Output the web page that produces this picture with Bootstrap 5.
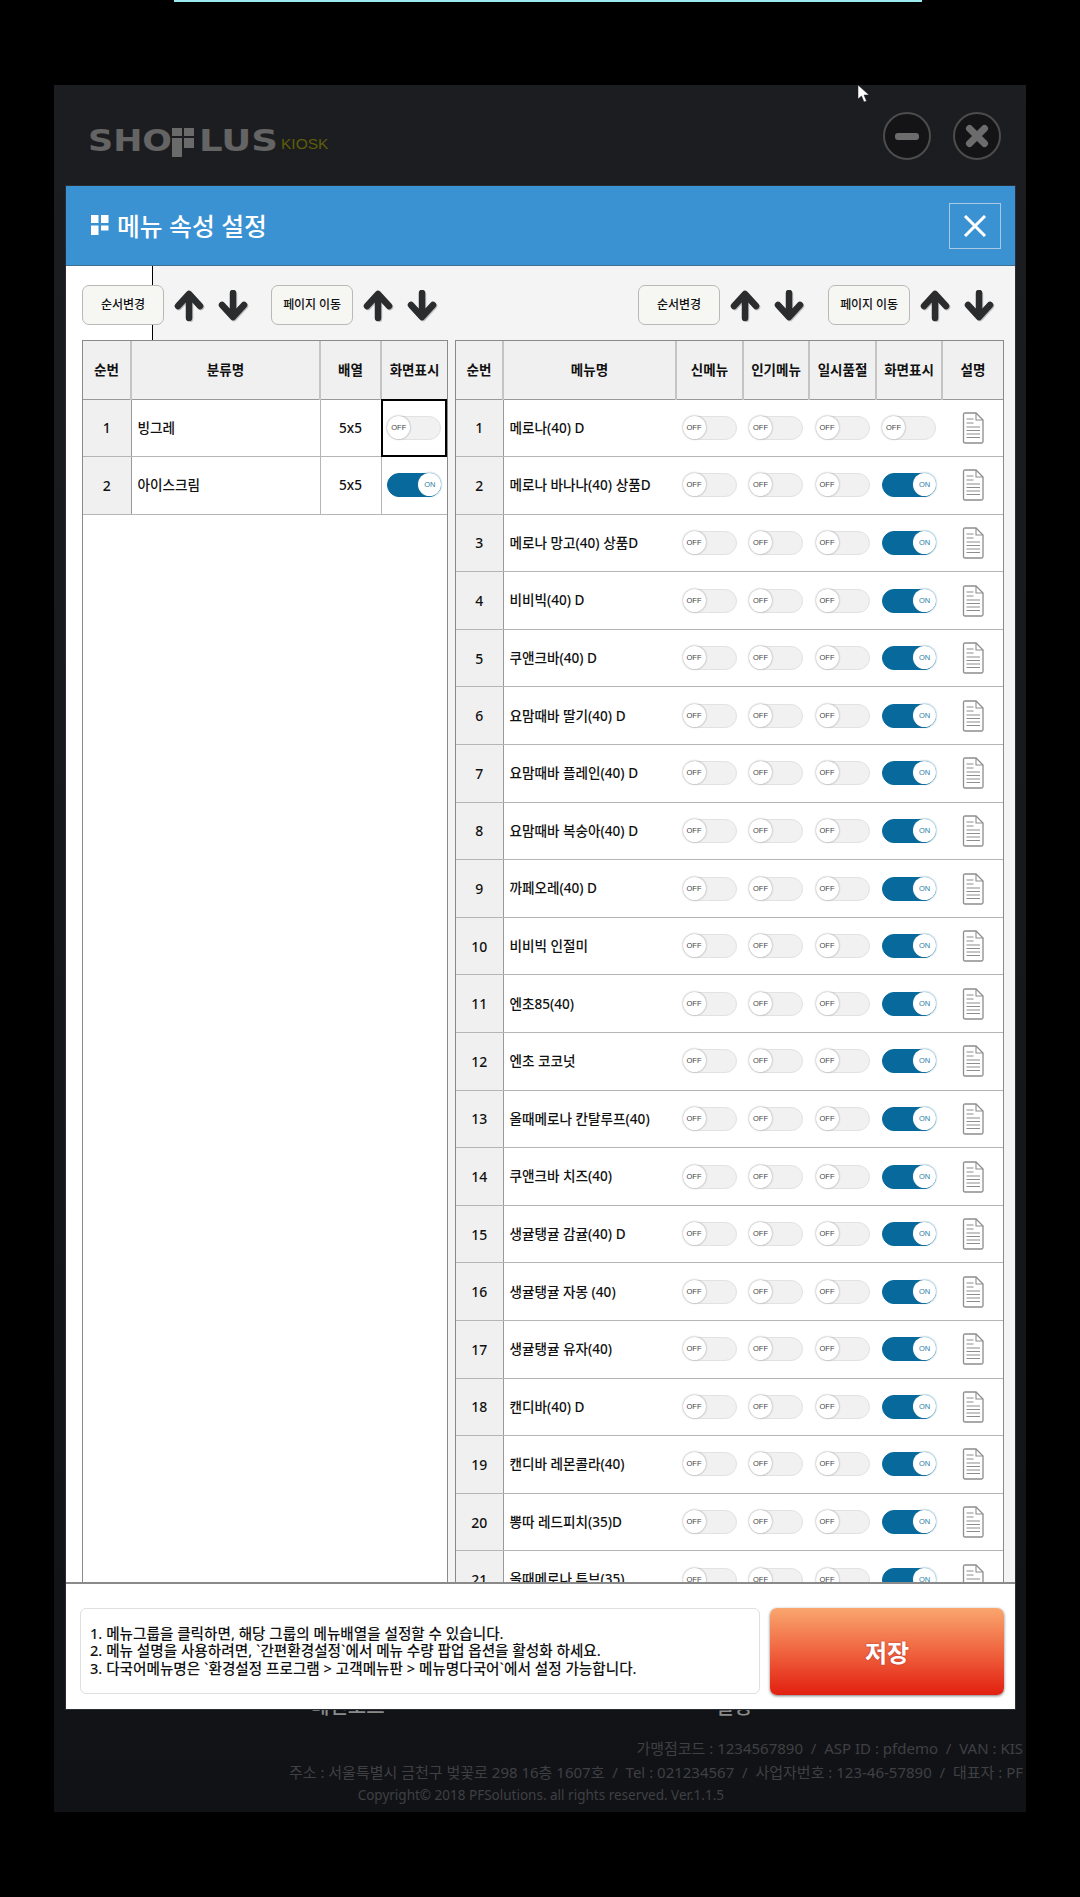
<!DOCTYPE html>
<html lang="ko"><head><meta charset="utf-8"><title>메뉴 속성 설정</title>
<link href="https://cdn.jsdelivr.net/npm/bootstrap@5.3.0/dist/css/bootstrap.min.css" rel="stylesheet">
<style>
html,body{background:#000;margin:0;height:1897px;overflow:hidden}
body{font-family:"Noto Sans","Noto Sans CJK KR",sans-serif;color:#111}
.topbar{height:2px;width:748px;margin-left:174px;margin-bottom:83px;background:#9aeaf0}
.kiosk-panel{width:972px;height:1727px;margin-left:54px;background:linear-gradient(#1c1d21,#111216);position:relative;overflow:hidden}
.panel-head{padding:27px 25px 0 35px;height:74px}
.round-ctl{width:48px;height:48px}
.round-gap{gap:22px}
.cursor-mark{position:absolute;left:804px;top:0;width:12px;height:17px}
.back-row{font-size:20px;line-height:26px;color:#8a8a8a;font-weight:500;height:26px}
.back-row span:first-child{margin-left:257px}
.back-row span:last-child{margin-right:274px}
.foot-lines{font-size:15px;line-height:23.700px;color:#3f4044;padding:17px 3px 4px 0;white-space:nowrap}
.foot-copy{padding-right:299px;font-size:13.500px}
.menu-modal{position:absolute;left:12px;top:101px;width:949px;height:1523px;background:#fff;box-shadow:0 0 0 1px #2a2d33}
.modal-top{height:80px;background:#3b92d2;border-bottom:1px solid #3f6f92;padding:0 14px 0 25px;color:#fff}
.modal-title{font-size:24.800px;font-weight:500;line-height:1;gap:8px}
.modal-title span{padding-top:2px}
.close-x{width:52px;height:46px;border:1px solid #a9c8e3;border-radius:0;padding:0;margin-top:0}
.tool-row{height:74px;padding:4px 21px 0 16px;background:linear-gradient(90deg,#fff 86px,#000 86px,#000 87px,#f4f4f4 87px)}
.tool-btn{width:82px;height:40px;padding:0;font-size:12px;font-weight:500;background:#f6f6f3;border:1px solid #b9b9b9;border-radius:7px;color:#111;letter-spacing:-.1px}
.arr{width:30px;height:31px;filter:drop-shadow(1px 1px 0 #bdbdbd)}
.arr-gap{gap:14px}.grp-gap{gap:10px}.set-gap{gap:24px}.set-gap-l{gap:23px}
.table-zone{height:1244px;padding-left:16px;background:linear-gradient(90deg,#fff 16px,#f4f4f4 16px);border-bottom:2px solid #8a8a8a;overflow:hidden;gap:7px}
.tbl-left{width:366px}.tbl-right{width:549px}
.tbl-wrap{background:#fff;border:1px solid #8a8a8a;border-bottom:0;height:1244px;overflow:hidden}
.grid-t{table-layout:fixed;width:100%;margin:0;border-collapse:collapse;font-size:13.600px;font-weight:500}
.grid-t>:not(caption)>*>*{padding:0;vertical-align:middle;border:1px solid #b5b5b5;background:transparent;color:#111;box-shadow:none}
.grid-t tr>*:first-child{border-left:0}.grid-t tr>*:last-child{border-right:0}
.grid-t thead tr>*{height:58px;background:#f0f0f0;font-size:13.500px;font-weight:700;text-align:center;border-top:0;border-bottom-color:#999;border-left-width:2px;border-left-color:#c4c4c4}
.grid-t thead tr>*:first-child{border-left:0}
.grid-t tbody td{height:57.600px;text-align:center}
.grid-t tbody td.num-c{background:#f0f0f0;font-size:14px;border-right-color:#999}
.grid-t tbody td.name-c{text-align:left;padding-left:6px;white-space:nowrap;border-right:0}
.grid-t tbody td.tog-c{border-left:0;border-right:0}
.grid-t tbody td.sel-c{outline:2px solid #000;outline-offset:-2px}
.sw{width:54px;height:24px;border-radius:12px;background:#f1f1f1;border:1px solid #e2e2e2;vertical-align:middle}
.sw i{width:23px;height:23px;margin:-1px 0 -1px -1px;border-radius:50%;background:#fff;box-shadow:0 0 2px #888;font:500 7.500px/23px "Liberation Sans",sans-serif;color:#444;text-align:center}
.sw.on{background:#07699c;border-color:#07699c;justify-content:flex-end}
.sw.on i{margin:-1px -1px -1px 0;color:#2c7ea6;box-shadow:0 0 2px #2a7ea5}
.doc-i{width:22px;height:32px;vertical-align:middle}
.modal-bottom{padding:24px 11px 0 14px;gap:10px}
.note-box{width:680px;height:86px;border:1px solid #dfdfdf;border-radius:6px;padding-left:9px;font-size:14.620px;line-height:17.300px;font-weight:500;white-space:nowrap}
.save-btn{width:234px;height:87px;border:0;border-radius:7px;background:linear-gradient(#f9a66f,#f0643f 50%,#e21f10);color:#fff;font-size:24px;font-weight:700;box-shadow:0 1px 3px #777;padding:3px 0 0;text-shadow:0 0 2px #a33}
.save-btn:hover{background:linear-gradient(#f9a66f,#f0643f 50%,#e21f10);color:#fff}
.logo-svg{width:260px;height:44px;margin-top:11px}
</style></head><body>
<svg width="0" height="0" class="d-block" aria-hidden="true"><defs>
<symbol id="up" viewBox="0 0 30 31"><path d="M15 28V5M4 16 15 4l11 12" fill="none" stroke="#2b2c2e" stroke-width="6.5" stroke-linecap="round" stroke-linejoin="round"/></symbol>
<symbol id="dn" viewBox="0 0 30 31"><path d="M15 3v23M4 15l11 12 11-12" fill="none" stroke="#2b2c2e" stroke-width="6.5" stroke-linecap="round" stroke-linejoin="round"/></symbol>
<symbol id="doc" viewBox="0 0 22 32"><path d="M1.500 2.500q0-1.500 1.500-1.500H14l7 7v21.500q0 1.500-1.500 1.500H3q-1.500 0-1.500-1.500z" fill="#fff" stroke="#8d8d8d" stroke-width="1.300"/><path d="M14 1v7h7" fill="none" stroke="#8d8d8d" stroke-width="1.100"/><path d="M4.500 7h7M4.500 11h7M4.500 15h13.500M4.500 18.500h13.500M4.500 22h13.500M4.500 25.500h13.500" stroke="#8d8d8d" stroke-width="1.100"/></symbol>
</defs></svg>
<div class="topbar"></div>
<div class="kiosk-panel d-flex flex-column">
<svg class="cursor-mark" viewBox="0 0 12 17"><path d="M0 0v14l3.500-3 2.500 6 2.500-1-2.500-6H11z" fill="#fff" stroke="#222" stroke-width=".5"/></svg>
<div class="panel-head d-flex justify-content-between align-items-start">
<svg class="logo-svg" viewBox="0 0 260 44"><g font-family="DejaVu Sans" font-weight="700" font-size="31" fill="#646464"><text x="-1" y="28" textLength="84" lengthAdjust="spacingAndGlyphs">SHO</text><text x="110" y="28" textLength="79" lengthAdjust="spacingAndGlyphs">LUS</text></g><g fill="#6a6a6a"><rect x="83" y="5" width="10" height="8"/><rect x="95" y="5" width="10" height="8"/><rect x="83" y="15" width="10" height="19"/><rect x="95" y="15" width="10" height="10"/></g><text x="192" y="26" font-family="Liberation Sans" font-size="15.500" fill="#5e5e08">KIOSK</text></svg>
<div class="d-flex round-gap">
<svg class="round-ctl" viewBox="0 0 48 48"><circle cx="24" cy="24" r="23" fill="#141416" stroke="#4c4c4c" stroke-width="2"/><rect x="12" y="21" width="24" height="7" rx="3" fill="#6c6c6c"/></svg>
<svg class="round-ctl" viewBox="0 0 48 48"><circle cx="24" cy="24" r="23" fill="#141416" stroke="#4c4c4c" stroke-width="2"/><path d="M16.500 16.500l15 15M31.500 16.500l-15 15" stroke="#6c6c6c" stroke-width="7" stroke-linecap="round"/></svg>
</div></div>
<div class="mt-auto back-row d-flex justify-content-between"><span>메인모드</span><span>설정</span></div>
<div class="foot-lines text-end">
<div>가맹점코드 : 1234567890 &nbsp;/&nbsp; ASP ID : pfdemo &nbsp;/&nbsp; VAN : KIS</div>
<div>주소 : 서울특별시 금천구 벚꽃로 298 16층 1607호 &nbsp;/&nbsp; Tel : 021234567 &nbsp;/&nbsp; 사업자번호 : 123-46-57890 &nbsp;/&nbsp; 대표자 : PF</div>
<div class="foot-copy">Copyright© 2018 PFSolutions. all rights reserved. Ver.1.1.5</div>
</div>
<div class="menu-modal">
<div class="modal-top d-flex justify-content-between align-items-center">
<div class="modal-title d-flex align-items-center"><svg width="18" height="20" viewBox="0 0 18 20" fill="#fff"><rect width="7.500" height="8"/><rect x="10" width="7.500" height="8"/><rect y="10.500" width="7.500" height="9.500"/><rect x="10" y="10.500" width="7.500" height="5"/></svg><span>메뉴 속성 설정</span></div>
<button class="btn close-x d-flex align-items-center justify-content-center" type="button" aria-label="닫기"><svg width="24" height="22" viewBox="0 0 24 22"><path d="M2 1l20 20M22 1 2 21" stroke="#fff" stroke-width="3"/></svg></button>
</div>
<div class="tool-row d-flex justify-content-between align-items-center">
<div class="d-flex set-gap-l align-items-center">
<div class="d-flex grp-gap align-items-center"><button class="btn tool-btn" type="button">순서변경</button><div class="d-flex arr-gap"><svg class="arr"><use href="#up"/></svg><svg class="arr"><use href="#dn"/></svg></div></div>
<div class="d-flex grp-gap align-items-center"><button class="btn tool-btn" type="button">페이지 이동</button><div class="d-flex arr-gap"><svg class="arr"><use href="#up"/></svg><svg class="arr"><use href="#dn"/></svg></div></div>
</div>
<div class="d-flex set-gap align-items-center">
<div class="d-flex grp-gap align-items-center"><button class="btn tool-btn" type="button">순서변경</button><div class="d-flex arr-gap"><svg class="arr"><use href="#up"/></svg><svg class="arr"><use href="#dn"/></svg></div></div>
<div class="d-flex grp-gap align-items-center"><button class="btn tool-btn" type="button">페이지 이동</button><div class="d-flex arr-gap"><svg class="arr"><use href="#up"/></svg><svg class="arr"><use href="#dn"/></svg></div></div>
</div></div>
<div class="table-zone d-flex">
<div class="tbl-wrap tbl-left"><table class="table grid-t"><colgroup><col style="width:48px"><col style="width:189px"><col style="width:61px"><col></colgroup>
<thead><tr><th>순번</th><th>분류명</th><th>배열</th><th>화면표시</th></tr></thead><tbody>
<tr><td class="num-c">1</td><td class="name-c">빙그레</td><td>5x5</td><td class="sel-c"><span class="sw d-inline-flex"><i>OFF</i></span></td></tr>
<tr><td class="num-c">2</td><td class="name-c">아이스크림</td><td>5x5</td><td><span class="sw on d-inline-flex"><i>ON</i></span></td></tr>
</tbody></table></div>
<div class="tbl-wrap tbl-right"><table class="table grid-t"><colgroup><col style="width:47px"><col style="width:173px"><col style="width:67px"><col style="width:66px"><col style="width:67px"><col style="width:66px"><col></colgroup>
<thead><tr><th>순번</th><th>메뉴명</th><th>신메뉴</th><th>인기메뉴</th><th>일시품절</th><th>화면표시</th><th>설명</th></tr></thead><tbody>
<tr><td class="num-c">1</td><td class="name-c">메로나(40) D</td><td class="tog-c"><span class="sw d-inline-flex"><i>OFF</i></span></td><td class="tog-c"><span class="sw d-inline-flex"><i>OFF</i></span></td><td class="tog-c"><span class="sw d-inline-flex"><i>OFF</i></span></td><td class="tog-c"><span class="sw d-inline-flex"><i>OFF</i></span></td><td class="tog-c"><svg class="doc-i"><use href="#doc"/></svg></td></tr>
<tr><td class="num-c">2</td><td class="name-c">메로나 바나나(40) 상품D</td><td class="tog-c"><span class="sw d-inline-flex"><i>OFF</i></span></td><td class="tog-c"><span class="sw d-inline-flex"><i>OFF</i></span></td><td class="tog-c"><span class="sw d-inline-flex"><i>OFF</i></span></td><td class="tog-c"><span class="sw on d-inline-flex"><i>ON</i></span></td><td class="tog-c"><svg class="doc-i"><use href="#doc"/></svg></td></tr>
<tr><td class="num-c">3</td><td class="name-c">메로나 망고(40) 상품D</td><td class="tog-c"><span class="sw d-inline-flex"><i>OFF</i></span></td><td class="tog-c"><span class="sw d-inline-flex"><i>OFF</i></span></td><td class="tog-c"><span class="sw d-inline-flex"><i>OFF</i></span></td><td class="tog-c"><span class="sw on d-inline-flex"><i>ON</i></span></td><td class="tog-c"><svg class="doc-i"><use href="#doc"/></svg></td></tr>
<tr><td class="num-c">4</td><td class="name-c">비비빅(40) D</td><td class="tog-c"><span class="sw d-inline-flex"><i>OFF</i></span></td><td class="tog-c"><span class="sw d-inline-flex"><i>OFF</i></span></td><td class="tog-c"><span class="sw d-inline-flex"><i>OFF</i></span></td><td class="tog-c"><span class="sw on d-inline-flex"><i>ON</i></span></td><td class="tog-c"><svg class="doc-i"><use href="#doc"/></svg></td></tr>
<tr><td class="num-c">5</td><td class="name-c">쿠앤크바(40) D</td><td class="tog-c"><span class="sw d-inline-flex"><i>OFF</i></span></td><td class="tog-c"><span class="sw d-inline-flex"><i>OFF</i></span></td><td class="tog-c"><span class="sw d-inline-flex"><i>OFF</i></span></td><td class="tog-c"><span class="sw on d-inline-flex"><i>ON</i></span></td><td class="tog-c"><svg class="doc-i"><use href="#doc"/></svg></td></tr>
<tr><td class="num-c">6</td><td class="name-c">요맘때바 딸기(40) D</td><td class="tog-c"><span class="sw d-inline-flex"><i>OFF</i></span></td><td class="tog-c"><span class="sw d-inline-flex"><i>OFF</i></span></td><td class="tog-c"><span class="sw d-inline-flex"><i>OFF</i></span></td><td class="tog-c"><span class="sw on d-inline-flex"><i>ON</i></span></td><td class="tog-c"><svg class="doc-i"><use href="#doc"/></svg></td></tr>
<tr><td class="num-c">7</td><td class="name-c">요맘때바 플레인(40) D</td><td class="tog-c"><span class="sw d-inline-flex"><i>OFF</i></span></td><td class="tog-c"><span class="sw d-inline-flex"><i>OFF</i></span></td><td class="tog-c"><span class="sw d-inline-flex"><i>OFF</i></span></td><td class="tog-c"><span class="sw on d-inline-flex"><i>ON</i></span></td><td class="tog-c"><svg class="doc-i"><use href="#doc"/></svg></td></tr>
<tr><td class="num-c">8</td><td class="name-c">요맘때바 복숭아(40) D</td><td class="tog-c"><span class="sw d-inline-flex"><i>OFF</i></span></td><td class="tog-c"><span class="sw d-inline-flex"><i>OFF</i></span></td><td class="tog-c"><span class="sw d-inline-flex"><i>OFF</i></span></td><td class="tog-c"><span class="sw on d-inline-flex"><i>ON</i></span></td><td class="tog-c"><svg class="doc-i"><use href="#doc"/></svg></td></tr>
<tr><td class="num-c">9</td><td class="name-c">까페오레(40) D</td><td class="tog-c"><span class="sw d-inline-flex"><i>OFF</i></span></td><td class="tog-c"><span class="sw d-inline-flex"><i>OFF</i></span></td><td class="tog-c"><span class="sw d-inline-flex"><i>OFF</i></span></td><td class="tog-c"><span class="sw on d-inline-flex"><i>ON</i></span></td><td class="tog-c"><svg class="doc-i"><use href="#doc"/></svg></td></tr>
<tr><td class="num-c">10</td><td class="name-c">비비빅 인절미</td><td class="tog-c"><span class="sw d-inline-flex"><i>OFF</i></span></td><td class="tog-c"><span class="sw d-inline-flex"><i>OFF</i></span></td><td class="tog-c"><span class="sw d-inline-flex"><i>OFF</i></span></td><td class="tog-c"><span class="sw on d-inline-flex"><i>ON</i></span></td><td class="tog-c"><svg class="doc-i"><use href="#doc"/></svg></td></tr>
<tr><td class="num-c">11</td><td class="name-c">엔초85(40)</td><td class="tog-c"><span class="sw d-inline-flex"><i>OFF</i></span></td><td class="tog-c"><span class="sw d-inline-flex"><i>OFF</i></span></td><td class="tog-c"><span class="sw d-inline-flex"><i>OFF</i></span></td><td class="tog-c"><span class="sw on d-inline-flex"><i>ON</i></span></td><td class="tog-c"><svg class="doc-i"><use href="#doc"/></svg></td></tr>
<tr><td class="num-c">12</td><td class="name-c">엔초 코코넛</td><td class="tog-c"><span class="sw d-inline-flex"><i>OFF</i></span></td><td class="tog-c"><span class="sw d-inline-flex"><i>OFF</i></span></td><td class="tog-c"><span class="sw d-inline-flex"><i>OFF</i></span></td><td class="tog-c"><span class="sw on d-inline-flex"><i>ON</i></span></td><td class="tog-c"><svg class="doc-i"><use href="#doc"/></svg></td></tr>
<tr><td class="num-c">13</td><td class="name-c">올때메로나 칸탈루프(40)</td><td class="tog-c"><span class="sw d-inline-flex"><i>OFF</i></span></td><td class="tog-c"><span class="sw d-inline-flex"><i>OFF</i></span></td><td class="tog-c"><span class="sw d-inline-flex"><i>OFF</i></span></td><td class="tog-c"><span class="sw on d-inline-flex"><i>ON</i></span></td><td class="tog-c"><svg class="doc-i"><use href="#doc"/></svg></td></tr>
<tr><td class="num-c">14</td><td class="name-c">쿠앤크바 치즈(40)</td><td class="tog-c"><span class="sw d-inline-flex"><i>OFF</i></span></td><td class="tog-c"><span class="sw d-inline-flex"><i>OFF</i></span></td><td class="tog-c"><span class="sw d-inline-flex"><i>OFF</i></span></td><td class="tog-c"><span class="sw on d-inline-flex"><i>ON</i></span></td><td class="tog-c"><svg class="doc-i"><use href="#doc"/></svg></td></tr>
<tr><td class="num-c">15</td><td class="name-c">생귤탱귤 감귤(40) D</td><td class="tog-c"><span class="sw d-inline-flex"><i>OFF</i></span></td><td class="tog-c"><span class="sw d-inline-flex"><i>OFF</i></span></td><td class="tog-c"><span class="sw d-inline-flex"><i>OFF</i></span></td><td class="tog-c"><span class="sw on d-inline-flex"><i>ON</i></span></td><td class="tog-c"><svg class="doc-i"><use href="#doc"/></svg></td></tr>
<tr><td class="num-c">16</td><td class="name-c">생귤탱귤 자몽 (40)</td><td class="tog-c"><span class="sw d-inline-flex"><i>OFF</i></span></td><td class="tog-c"><span class="sw d-inline-flex"><i>OFF</i></span></td><td class="tog-c"><span class="sw d-inline-flex"><i>OFF</i></span></td><td class="tog-c"><span class="sw on d-inline-flex"><i>ON</i></span></td><td class="tog-c"><svg class="doc-i"><use href="#doc"/></svg></td></tr>
<tr><td class="num-c">17</td><td class="name-c">생귤탱귤 유자(40)</td><td class="tog-c"><span class="sw d-inline-flex"><i>OFF</i></span></td><td class="tog-c"><span class="sw d-inline-flex"><i>OFF</i></span></td><td class="tog-c"><span class="sw d-inline-flex"><i>OFF</i></span></td><td class="tog-c"><span class="sw on d-inline-flex"><i>ON</i></span></td><td class="tog-c"><svg class="doc-i"><use href="#doc"/></svg></td></tr>
<tr><td class="num-c">18</td><td class="name-c">캔디바(40) D</td><td class="tog-c"><span class="sw d-inline-flex"><i>OFF</i></span></td><td class="tog-c"><span class="sw d-inline-flex"><i>OFF</i></span></td><td class="tog-c"><span class="sw d-inline-flex"><i>OFF</i></span></td><td class="tog-c"><span class="sw on d-inline-flex"><i>ON</i></span></td><td class="tog-c"><svg class="doc-i"><use href="#doc"/></svg></td></tr>
<tr><td class="num-c">19</td><td class="name-c">캔디바 레몬콜라(40)</td><td class="tog-c"><span class="sw d-inline-flex"><i>OFF</i></span></td><td class="tog-c"><span class="sw d-inline-flex"><i>OFF</i></span></td><td class="tog-c"><span class="sw d-inline-flex"><i>OFF</i></span></td><td class="tog-c"><span class="sw on d-inline-flex"><i>ON</i></span></td><td class="tog-c"><svg class="doc-i"><use href="#doc"/></svg></td></tr>
<tr><td class="num-c">20</td><td class="name-c">뽕따 레드피치(35)D</td><td class="tog-c"><span class="sw d-inline-flex"><i>OFF</i></span></td><td class="tog-c"><span class="sw d-inline-flex"><i>OFF</i></span></td><td class="tog-c"><span class="sw d-inline-flex"><i>OFF</i></span></td><td class="tog-c"><span class="sw on d-inline-flex"><i>ON</i></span></td><td class="tog-c"><svg class="doc-i"><use href="#doc"/></svg></td></tr>
<tr><td class="num-c">21</td><td class="name-c">올때메로나 튜브(35)</td><td class="tog-c"><span class="sw d-inline-flex"><i>OFF</i></span></td><td class="tog-c"><span class="sw d-inline-flex"><i>OFF</i></span></td><td class="tog-c"><span class="sw d-inline-flex"><i>OFF</i></span></td><td class="tog-c"><span class="sw on d-inline-flex"><i>ON</i></span></td><td class="tog-c"><svg class="doc-i"><use href="#doc"/></svg></td></tr>
</tbody></table></div>
</div>
<div class="modal-bottom d-flex">
<div class="note-box d-flex align-items-center"><div>1. 메뉴그룹을 클릭하면, 해당 그룹의 메뉴배열을 설정할 수 있습니다.<br>2. 메뉴 설명을 사용하려면, `간편환경설정`에서 메뉴 수량 팝업 옵션을 활성화 하세요.<br>3. 다국어메뉴명은 `환경설정 프로그램 &gt; 고객메뉴판 &gt; 메뉴명다국어`에서 설정 가능합니다.</div></div>
<button class="btn save-btn" type="button">저장</button>
</div>
</div>
</div>
<script src="https://cdn.jsdelivr.net/npm/bootstrap@5.3.0/dist/js/bootstrap.bundle.min.js"></script>
</body></html>
